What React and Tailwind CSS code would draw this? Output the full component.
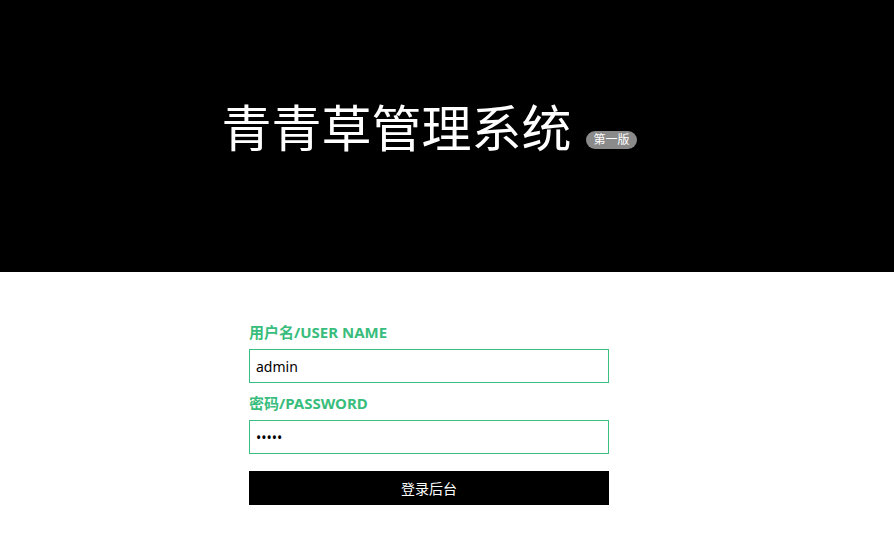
import React from "react";

export default function App() {
  const font = { fontFamily: '"Noto Sans", "Noto Sans CJK SC", sans-serif' };
  return (
    <div className="w-[894px] h-[544px] bg-white overflow-hidden" style={font}>
      <div className="h-[272px] bg-black flex items-start justify-center pr-[36px] pt-[96px]">
        <div className="flex items-end">
          <h1 className="text-[50px] leading-[64px] text-white font-normal">青青草管理系统</h1>
          <span className="ml-[15px] mb-[11px] h-[18px] px-[7px] rounded-full bg-[#8a8a8a] text-white text-[12px] leading-[18px]">第一版</span>
        </div>
      </div>
      <div className="flex justify-center pr-[36px] pt-[50px]">
        <form className="w-[360px] flex flex-col">
          <label className="text-[15px] leading-[20px] font-bold text-[#38bd7c]">用户名/USER NAME</label>
          <input
            className="mt-[7px] h-[34px] border border-[#3cbf80] px-[6px] text-[14px] text-black outline-none"
            defaultValue="admin"
          />
          <label className="mt-[10px] text-[15px] leading-[20px] font-bold text-[#38bd7c]">密码/PASSWORD</label>
          <input
            type="password"
            className="mt-[7px] h-[34px] border border-[#3cbf80] px-[6px] text-[14px] text-black outline-none"
            defaultValue="admin"
          />
          <button type="button" className="mt-[17px] h-[34px] bg-black text-white text-[14px]">登录后台</button>
        </form>
      </div>
    </div>
  );
}
